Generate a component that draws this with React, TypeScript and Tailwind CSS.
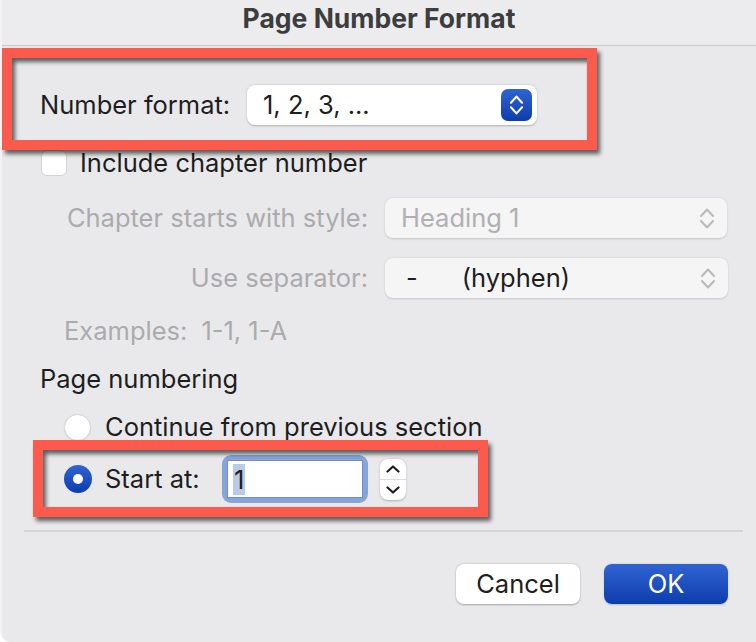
import React from 'react';

const UpDown = ({ color, w = 14, h = 21, sw = 2 }: { color: string; w?: number; h?: number; sw?: number }) => (
  <svg width={w} height={h} viewBox="0 0 14 21" fill="none">
    <path d="M1 8 L7 1.5 L13 8" stroke={color} strokeWidth={sw} strokeLinecap="round" strokeLinejoin="round" />
    <path d="M1 13 L7 19.5 L13 13" stroke={color} strokeWidth={sw} strokeLinecap="round" strokeLinejoin="round" />
  </svg>
);

const Callout = ({ className }: { className: string }) => (
  <div
    className={`pointer-events-none absolute border-[10px] border-[#fd5a4e] [filter:drop-shadow(3px_4px_2px_rgba(0,0,0,0.6))] ${className}`}
  />
);

export default function App() {
  return (
    <div className="relative w-[756px] h-[642px] overflow-hidden whitespace-nowrap rounded-bl-[10px] bg-[#e9e9eb] border-l-2 border-[#f3f3f4] font-['Inter',sans-serif] text-[25.5px] text-[#1e1e1e]">
      {/* title */}
      <div className="h-[46px] border-b border-[#c9c9cb] bg-[#ececee] text-center">
        <span className="text-[26.5px] font-bold leading-[32px] text-[#3d3d3d]">Page Number Format</span>
      </div>

      <div className="pl-[38px]">
        {/* number format */}
        <div className="mt-[39px] flex h-[40px] items-center">
          <div className="w-[207px]">Number format:</div>
          <div className="flex h-[40px] w-[290px] items-center justify-between rounded-[8px] bg-white pl-[16px] pr-[5px] shadow-[0_0.5px_2px_rgba(0,0,0,0.25)]">
            <span>1, 2, 3, ...</span>
            <div className="flex h-[32px] w-[31px] items-center justify-center rounded-[7px] bg-linear-to-b from-[#3263d2] to-[#0c3dad]">
              <UpDown color="#ffffff" w={13} h={20} sw={2.3} />
            </div>
          </div>
        </div>

        {/* include chapter */}
        <div className="mt-[25px] flex h-[26px] items-center">
          <div className="ml-[1px] h-[26px] w-[26px] rounded-[6px] border border-[#d3d3d5] bg-white" />
          <span className="ml-[13px]">Include chapter number</span>
        </div>

        {/* chapter style */}
        <div className="mt-[22px] flex h-[40px] items-center">
          <div className="ml-[24px] w-[304px] text-right text-[#ababad]">Chapter starts with style:</div>
          <div className="ml-[17px] flex h-[40px] w-[342px] items-center justify-between rounded-[8px] bg-[#f5f5f6] pl-[16px] pr-[13px] shadow-[0_0.5px_2px_rgba(0,0,0,0.15)]">
            <span className="text-[#b0b0b2]">Heading 1</span>
            <UpDown color="#b9b9bb" />
          </div>
        </div>

        {/* separator */}
        <div className="mt-[20px] flex h-[40px] items-center">
          <div className="ml-[24px] w-[304px] text-right text-[#ababad]">Use separator:</div>
          <div className="ml-[17px] flex h-[40px] w-[343px] items-center justify-between rounded-[8px] bg-[#f5f5f6] pl-[21px] pr-[13px] shadow-[0_0.5px_2px_rgba(0,0,0,0.15)]">
            <span className="whitespace-pre">
              -<span className="ml-[44px]">(hyphen)</span>
            </span>
            <UpDown color="#b9b9bb" />
          </div>
        </div>

        {/* examples */}
        <div className="mt-[17px] ml-[24px] flex leading-[32px] text-[#ababad]">
          <span>Examples:</span>
          <span className="ml-[14px]">1-1, 1-A</span>
        </div>

        {/* page numbering */}
        <div className="mt-[16px] leading-[32px]">Page numbering</div>

        <div className="mt-[18px] ml-[24px] flex h-[28px] items-center">
          <div className="h-[27px] w-[27px] rounded-full border border-[#d6d6d8] bg-white shadow-[0_0.5px_1px_rgba(0,0,0,0.1)]" />
          <span className="ml-[14px]">Continue from previous section</span>
        </div>

        <div className="mt-[14px] ml-[24px] flex h-[48px] items-center">
          <div className="flex h-[28px] w-[28px] items-center justify-center rounded-full bg-linear-to-b from-[#3263d2] to-[#0c3dad]">
            <div className="h-[10px] w-[10px] rounded-full bg-white" />
          </div>
          <span className="ml-[13px] w-[117px]">Start at:</span>
          <div className="rounded-[9px] bg-[#87a4d8] p-[5px]">
            <div className="flex h-[38px] w-[136px] items-center border border-[#6f8fca] bg-white pl-[5px]">
              <span className="bg-[#b8cbea] px-[1px] leading-[31px]">1</span>
            </div>
          </div>
          <div className="ml-[12px] flex h-[41px] w-[26px] flex-col overflow-hidden rounded-[8px] bg-white shadow-[0_0.5px_2px_rgba(0,0,0,0.25)]">
            <div className="flex flex-1 items-center justify-center border-b border-[#dcdcde]">
              <svg width="14" height="8" viewBox="0 0 14 8" fill="none">
                <path d="M1.5 6.5 L7 1.5 L12.5 6.5" stroke="#1e1e1e" strokeWidth="2.2" strokeLinecap="round" strokeLinejoin="round" />
              </svg>
            </div>
            <div className="flex flex-1 items-center justify-center">
              <svg width="14" height="8" viewBox="0 0 14 8" fill="none">
                <path d="M1.5 1.5 L7 6.5 L12.5 1.5" stroke="#1e1e1e" strokeWidth="2.2" strokeLinecap="round" strokeLinejoin="round" />
              </svg>
            </div>
          </div>
        </div>
      </div>

      {/* bottom divider */}
      <div className="mt-[27px] ml-[22px] mr-[13px] h-[2px] bg-[#d5d5d7]" />

      {/* buttons */}
      <div className="mt-[32px] flex justify-end gap-[24px] pr-[28px]">
        <button className="h-[40px] w-[124px] rounded-[8px] bg-white text-[#1e1e1e] shadow-[0_0.5px_2px_rgba(0,0,0,0.3)]">Cancel</button>
        <button className="h-[40px] w-[124px] rounded-[8px] bg-linear-to-b from-[#3263d2] to-[#0c3dad] text-white shadow-[0_0.5px_2px_rgba(0,0,0,0.2)]">OK</button>
      </div>

      {/* annotation boxes */}
      <Callout className="left-[0px] top-[48px] h-[102px] w-[595px]" />
      <Callout className="left-[31px] top-[440px] h-[77px] w-[455px]" />
    </div>
  );
}
